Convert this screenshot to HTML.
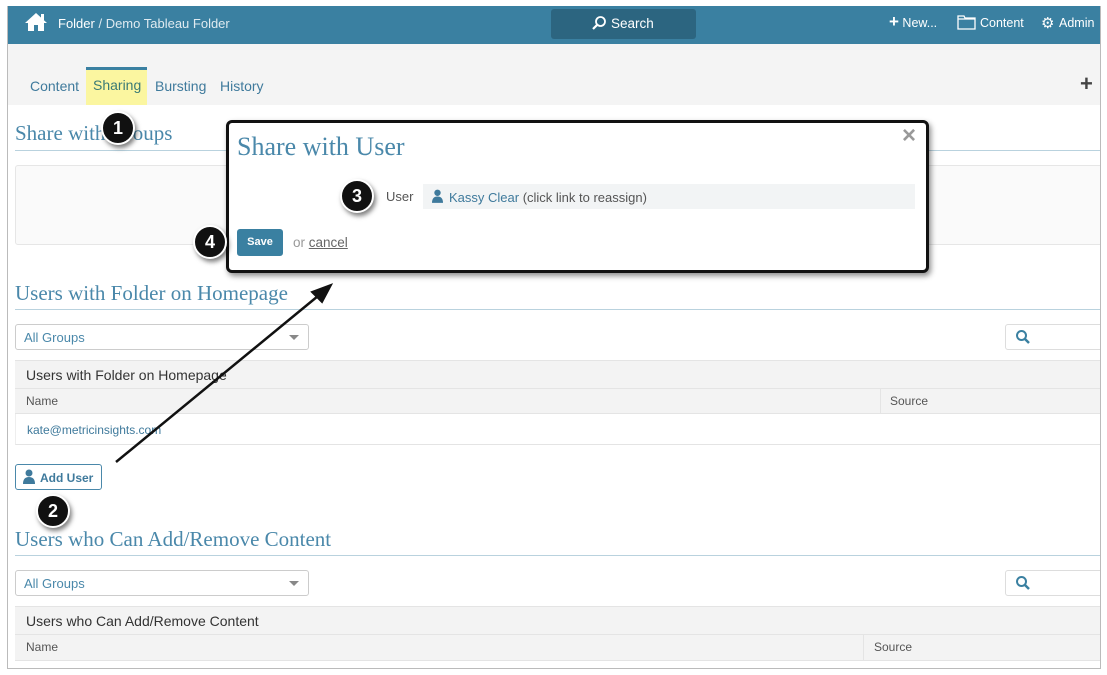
<!DOCTYPE html>
<html><head><meta charset="utf-8"><style>
*{box-sizing:border-box;margin:0;padding:0}
body{width:1107px;height:675px;background:#fff;font-family:"Liberation Sans",sans-serif;position:relative;overflow:hidden}
.a{position:absolute}
.clip{position:absolute;left:0;top:0;width:1101px;height:669px;overflow:hidden}
.frame{left:7px;top:6px;width:1094px;height:663px;border:1px solid #bbb;border-top:none}
.nav{left:7px;top:6px;width:1094px;height:38px;background:#3a80a1}
.navt{color:#fff;font-size:13px}
.tabs{left:8px;top:44px;width:1092px;height:61px;background:#f4f4f4}
.tab{font-size:14px;color:#3f7a9c;top:78px}
h2{position:absolute;font-family:"Liberation Serif",serif;font-weight:normal;color:#4a88aa;font-size:21px}
.rule{height:1px;background:#b9d2de;left:15px;width:1085px}
.dd{border:1px solid #ccc;border-radius:3px;background:#fff;height:26px;width:294px;left:15px;color:#4a88aa;font-size:13px;padding:5px 8px}
.dd:after{content:"";position:absolute;right:9px;top:10px;border:5px solid transparent;border-top:5px solid #888}
.sb{border:1px solid #ddd;border-radius:3px;left:1005px;width:100px;height:26px}
.th{left:15px;width:1090px;background:#f3f3f3;border-top:1px solid #e4e4e4;border-bottom:1px solid #e4e4e4;font-size:14px;color:#333;padding-left:11px}
.ch{left:15px;width:1090px;background:#f3f3f3;border-bottom:1px solid #e4e4e4;font-size:12px;color:#555;padding-left:11px}
.circ{width:34px;height:34px;border-radius:50%;background:#111;border:2px solid #fff;color:#fff;font-size:18px;font-weight:bold;text-align:center;line-height:30px;box-shadow:2px 3px 5px rgba(0,0,0,.5)}
</style></head><body>
<div class="clip">
<div class="a nav"></div>
<svg class="a" style="left:24px;top:12px" width="24" height="20" viewBox="0 0 24 20"><path d="M12 1 L1 11 L4 11 L4 19 L10 19 L10 13 L14 13 L14 19 L20 19 L20 11 L23 11 Z" fill="#fff"/><rect x="17" y="2" width="3" height="6" fill="#fff"/></svg>
<div class="a navt" style="left:58px;top:16px">Folder <span style="color:#dfeaf0">/ Demo Tableau Folder</span></div>
<div class="a" style="left:551px;top:9px;width:145px;height:30px;background:#2c6580;border-radius:3px"></div>
<svg class="a" style="left:591px;top:15px" width="16" height="16" viewBox="0 0 16 16"><circle cx="9.5" cy="6.5" r="4.5" fill="none" stroke="#fff" stroke-width="1.8"/><path d="M6.3 9.7 L2 14" stroke="#fff" stroke-width="2.2"/></svg>
<div class="a navt" style="left:611px;top:16px;font-size:13.5px">Search</div>
<div class="a navt" style="left:889px;top:15px;font-size:12.5px"><b style="font-size:17px;line-height:13px">+</b> New...</div>
<svg class="a" style="left:957px;top:14px" width="20" height="16" viewBox="0 0 20 16"><path d="M1 2 H7 L8 4 H18 V15 H1 Z M1 5 H18" fill="none" stroke="#fff" stroke-width="1.3"/></svg>
<div class="a navt" style="left:980px;top:16px;font-size:12.5px">Content</div>
<div class="a navt" style="left:1041px;top:14px;font-size:15px">⚙</div>
<div class="a navt" style="left:1059px;top:16px;font-size:12.5px">Admin</div>
<div class="a tabs"></div>
<div class="a tab" style="left:30px">Content</div>
<div class="a" style="left:86px;top:67px;width:61px;height:38px;background:#fbf6a0;border-top:3px solid #3a80a1"></div>
<div class="a tab" style="left:93px;top:77px;color:#3a7a75">Sharing</div>
<div class="a tab" style="left:155px">Bursting</div>
<div class="a tab" style="left:220px">History</div>
<div class="a" style="left:1080px;top:71px;font-size:22px;font-weight:bold;color:#444">+</div>
<h2 style="left:15px;top:121px">Share with Groups</h2>
<div class="a rule" style="top:150px"></div>
<div class="a" style="left:15px;top:165px;width:1090px;height:80px;border:1px solid #e6e6e6;border-radius:3px;background:#fafafa"></div>
<h2 style="left:15px;top:281px">Users with Folder on Homepage</h2>
<div class="a rule" style="top:309px"></div>
<div class="a dd" style="top:324px">All Groups</div>
<div class="a sb" style="top:324px"></div>
<svg class="a" style="left:1015px;top:329px" width="16" height="16" viewBox="0 0 16 16"><circle cx="6.5" cy="6.5" r="4.5" fill="none" stroke="#3a80a1" stroke-width="2"/><path d="M10 10 L14 14" stroke="#3a80a1" stroke-width="2.5"/></svg>
<div class="a th" style="top:360px;height:29px;line-height:28px">Users with Folder on Homepage</div>
<div class="a ch" style="top:389px;height:25px;line-height:24px">Name</div>
<div class="a" style="left:880px;top:389px;height:24px;border-left:1px solid #e4e4e4;font-size:12px;color:#555;padding-left:9px;line-height:24px">Source</div>
<div class="a" style="left:15px;top:414px;width:1090px;height:31px;border-bottom:1px solid #e4e4e4;border-left:1px solid #eee;font-size:12px;color:#3f7a9c;padding:9px 11px">kate@metricinsights.com</div>
<div class="a" style="left:15px;top:464px;width:87px;height:26px;border:1px solid #4a88aa;border-radius:3px;font-size:12px;font-weight:bold;color:#3f7a9c;padding:6px 0 0 24px">Add User</div>
<svg class="a" style="left:23px;top:469px" width="12" height="15" viewBox="0 0 12 15"><circle cx="6" cy="4" r="3.5" fill="#3f7a9c"/><path d="M0 15 Q0 8 6 8 Q12 8 12 15Z" fill="#3f7a9c"/></svg>
<h2 style="left:15px;top:527px">Users who Can Add/Remove Content</h2>
<div class="a rule" style="top:555px"></div>
<div class="a dd" style="top:570px">All Groups</div>
<div class="a sb" style="top:570px"></div>
<svg class="a" style="left:1015px;top:575px" width="16" height="16" viewBox="0 0 16 16"><circle cx="6.5" cy="6.5" r="4.5" fill="none" stroke="#3a80a1" stroke-width="2"/><path d="M10 10 L14 14" stroke="#3a80a1" stroke-width="2.5"/></svg>
<div class="a th" style="top:606px;height:29px;line-height:28px">Users who Can Add/Remove Content</div>
<div class="a ch" style="top:635px;height:26px;line-height:25px">Name</div>
<div class="a" style="left:863px;top:635px;height:25px;border-left:1px solid #e4e4e4;font-size:12px;color:#555;padding-left:10px;line-height:25px">Source</div>
</div>
<div class="a frame"></div>
<!-- modal -->
<div class="a" style="left:226px;top:120px;width:703px;height:153px;background:#fff;border:3px solid #111;border-radius:6px;box-shadow:2px 3px 6px rgba(0,0,0,.45)"></div>
<div class="a" style="left:237px;top:132px;font-family:'Liberation Serif',serif;font-size:26px;color:#4a88aa">Share with User</div>
<div class="a" style="left:902px;top:122px;font-size:24px;color:#999;font-weight:bold">×</div>
<div class="a" style="left:386px;top:189px;font-size:13px;color:#555">User</div>
<div class="a" style="left:423px;top:184px;width:492px;height:25px;background:#f2f4f5"></div>
<svg class="a" style="left:432px;top:189px" width="11" height="14" viewBox="0 0 12 15"><circle cx="6" cy="4" r="3.5" fill="#3f7a9c"/><path d="M0 15 Q0 8 6 8 Q12 8 12 15Z" fill="#3f7a9c"/></svg>
<div class="a" style="left:449px;top:190px;font-size:13px;color:#555"><span style="color:#3f7a9c">Kassy Clear</span> (click link to reassign)</div>
<div class="a" style="left:237px;top:229px;width:46px;height:27px;background:#3a80a1;border-radius:3px;color:#fff;font-size:11px;font-weight:bold;text-align:center;line-height:27px">Save</div>
<div class="a" style="left:293px;top:235px;font-size:13.5px;color:#999">or <span style="color:#666;text-decoration:underline">cancel</span></div>
<svg class="a" style="left:0;top:0" width="1107" height="675"><line x1="116" y1="462" x2="318" y2="296" stroke="#111" stroke-width="2.5"/><path d="M331 285 L312 292 L322 302 Z" fill="#111" stroke="#111" stroke-width="2"/></svg>
<div class="a circ" style="left:101px;top:111px">1</div>
<div class="a circ" style="left:36px;top:494px">2</div>
<div class="a circ" style="left:340px;top:179px">3</div>
<div class="a circ" style="left:193px;top:225px">4</div>
</body></html>
